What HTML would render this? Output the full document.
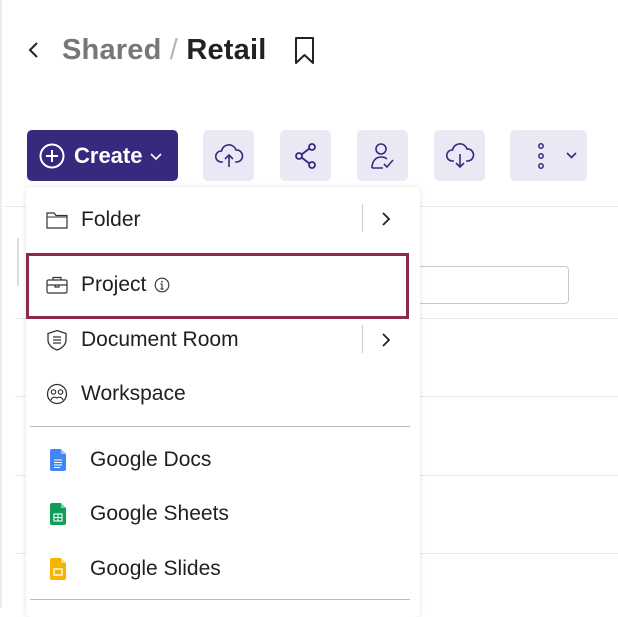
<!DOCTYPE html>
<html><head><meta charset="utf-8"><style>
*{margin:0;padding:0;box-sizing:border-box}
body{width:618px;height:608px;overflow:hidden;background:#fff;font-family:"Liberation Sans",sans-serif;position:relative;color:#1f1f1f}
.abs{position:absolute}
.edge{left:0;top:0;width:2px;height:608px;background:#ececf0}
.hl{height:1px;background:#e6e6e6}
.btn{top:130px;height:51px;background:#ebe8f5;border-radius:5px;display:flex;align-items:center;justify-content:center}
.menu{left:26px;top:187px;width:394px;height:430px;background:#fff;border-radius:5px;box-shadow:0 0 6px rgba(0,0,0,.12)}
.item{position:absolute;left:0;font-size:21px;color:#1f1f1f;display:flex;align-items:center}
.sep{position:absolute;left:4px;width:380px;height:1px;background:#bdbdbd}
</style></head><body>
<div class="abs edge"></div>
<svg class="abs" style="left:26px;top:40px" width="16" height="20" viewBox="0 0 16 20"><path d="M11 3 L4 10 L11 17" stroke="#222" stroke-width="2" fill="none"/></svg>
<div class="abs" style="left:62px;top:32px;font-size:29px;line-height:36px;font-weight:bold;letter-spacing:0.2px"><span style="color:#77777a">Shared</span> <span style="color:#b5b5b8;font-weight:normal">/</span> <span style="color:#222">Retail</span></div>
<svg class="abs" style="left:293px;top:36px" width="24" height="30" viewBox="0 0 24 30"><path d="M3 2 H20 V27 L11.5 19 L3 27 Z" stroke="#222" stroke-width="2" fill="none" stroke-linejoin="round"/></svg>

<div class="abs hl" style="left:5px;top:206px;width:613px"></div>
<div class="abs hl" style="left:15px;top:318px;width:603px"></div>
<div class="abs hl" style="left:15px;top:396px;width:603px"></div>
<div class="abs hl" style="left:15px;top:475px;width:603px"></div>
<div class="abs hl" style="left:15px;top:553px;width:603px"></div>
<div class="abs" style="left:17px;top:238px;width:2px;height:48px;background:#ddd"></div>
<div class="abs" style="left:400px;top:266px;width:169px;height:38px;border:1px solid #c8c8c8;border-radius:4px"></div>

<div class="abs" style="left:27px;top:130px;width:151px;height:51px;background:#372a7e;border-radius:5px;color:#fff;font-weight:bold;font-size:22px;display:flex;align-items:center">
<svg style="margin-left:11px" width="28" height="28" viewBox="0 0 28 28"><circle cx="14" cy="14" r="11.5" stroke="#fff" stroke-width="2" fill="none"/><path d="M14 8V20M8 14H20" stroke="#fff" stroke-width="2"/></svg>
<span style="margin-left:8px">Create</span>
<svg style="margin-left:7px" width="14" height="10" viewBox="0 0 14 10"><path d="M2 3 L7 8 L12 3" stroke="#fff" stroke-width="1.6" fill="none"/></svg></div>

<div class="abs btn" style="left:203px;width:51px"><svg width="30" height="26" viewBox="0 0 30 26"><path d="M9 19 H7 A5.5 5.5 0 0 1 7.5 8 A7.5 7.5 0 0 1 22 7 A5.5 5.5 0 0 1 23 19 H21" stroke="#372a7e" stroke-width="1.6" fill="none"/><path d="M15 24V12M11 16L15 12L19 16" stroke="#372a7e" stroke-width="1.6" fill="none"/></svg></div>
<div class="abs btn" style="left:280px;width:51px"><svg width="26" height="30" viewBox="0 0 26 30"><circle cx="19" cy="6" r="3" stroke="#372a7e" stroke-width="1.8" fill="none"/><circle cx="6" cy="15" r="3" stroke="#372a7e" stroke-width="1.8" fill="none"/><circle cx="19" cy="24" r="3" stroke="#372a7e" stroke-width="1.8" fill="none"/><path d="M8.6 13.5L16.4 7.5M8.6 16.5L16.4 22.5" stroke="#372a7e" stroke-width="1.8"/></svg></div>
<div class="abs btn" style="left:357px;width:51px"><svg width="28" height="30" viewBox="0 0 28 30"><circle cx="12" cy="8" r="5" stroke="#372a7e" stroke-width="1.6" fill="none"/><path d="M3 27 C3 20 7 16 12 16 C15 16 17 17 18 18" stroke="#372a7e" stroke-width="1.6" fill="none"/><path d="M3 27H14M15 23L18 26L24 19" stroke="#372a7e" stroke-width="1.6" fill="none"/></svg></div>
<div class="abs btn" style="left:434px;width:51px"><svg width="30" height="28" viewBox="0 0 30 28"><path d="M9 19 H7 A5.5 5.5 0 0 1 7.5 8 A7.5 7.5 0 0 1 22 7 A5.5 5.5 0 0 1 23 19 H21" stroke="#372a7e" stroke-width="1.6" fill="none"/><path d="M15 12V25M11 21L15 25L19 21" stroke="#372a7e" stroke-width="1.6" fill="none"/></svg></div>
<div class="abs btn" style="left:510px;width:77px"><svg width="60" height="30" viewBox="0 0 60 30"><circle cx="22" cy="5" r="2.2" stroke="#372a7e" stroke-width="1.5" fill="none"/><circle cx="22" cy="15" r="2.2" stroke="#372a7e" stroke-width="1.5" fill="none"/><circle cx="22" cy="25" r="2.2" stroke="#372a7e" stroke-width="1.5" fill="none"/><path d="M48 12L52.5 16.5L57 12" stroke="#372a7e" stroke-width="1.6" fill="none"/></svg></div>

<div class="abs menu">
 <div class="item" style="top:21px;left:20px"><svg width="22" height="20" viewBox="0 0 22 20"><path d="M1 3H8L10 5.5H21V18H1Z" stroke="#333" stroke-width="1.2" fill="none"/><path d="M1 7H21" stroke="#333" stroke-width="1"/></svg><span style="margin-left:13px">Folder</span></div>
 <div style="position:absolute;left:336px;top:17px;width:1px;height:28px;background:#ccc"></div>
 <svg style="position:absolute;left:354px;top:24px" width="12" height="16" viewBox="0 0 12 16"><path d="M3 2L9 8L3 14" stroke="#222" stroke-width="1.8" fill="none"/></svg>

 <div class="item" style="top:86px;left:20px"><svg width="22" height="20" viewBox="0 0 22 20"><rect x="1" y="5" width="20" height="13" rx="1.5" stroke="#333" stroke-width="1.2" fill="none"/><path d="M7 5V2.5H15V5M1 10H21M9 10V12H13V10" stroke="#333" stroke-width="1.2" fill="none"/></svg><span style="margin-left:13px">Project</span>
 <svg style="margin-left:8px" width="16" height="16" viewBox="0 0 16 16"><circle cx="8" cy="8" r="6.8" stroke="#333" stroke-width="1.1" fill="none"/><path d="M8 7V12M6.5 12H9.5M6.5 7H8" stroke="#333" stroke-width="1.2"/><circle cx="8" cy="4.8" r=".9" fill="#333"/></svg></div>

 <div class="item" style="top:141px;left:20px"><svg width="22" height="22" viewBox="0 0 22 22"><path d="M11 1.5L20 4.5V11C20 16 15.5 19.5 11 21C6.5 19.5 2 16 2 11V4.5Z" stroke="#333" stroke-width="1.3" fill="none"/><path d="M7 8H15M7 11H15M7 14H15" stroke="#333" stroke-width="1.3"/></svg><span style="margin-left:13px">Document Room</span></div>
 <div style="position:absolute;left:336px;top:138px;width:1px;height:28px;background:#ccc"></div>
 <svg style="position:absolute;left:354px;top:145px" width="12" height="16" viewBox="0 0 12 16"><path d="M3 2L9 8L3 14" stroke="#222" stroke-width="1.8" fill="none"/></svg>

 <div class="item" style="top:195px;left:20px"><svg width="22" height="22" viewBox="0 0 22 22"><circle cx="11" cy="11" r="9.5" stroke="#333" stroke-width="1.3" fill="none"/><circle cx="7.5" cy="9" r="2.2" stroke="#333" stroke-width="1.2" fill="none"/><circle cx="14.5" cy="9" r="2.2" stroke="#333" stroke-width="1.2" fill="none"/><path d="M5 17C6 14 9 13.5 11 15C13 13.5 16 14 17 17" stroke="#333" stroke-width="1.2" fill="none"/></svg><span style="margin-left:13px">Workspace</span></div>

 <div class="sep" style="top:239px"></div>

 <div class="item" style="top:261px;left:24px"><svg width="16" height="22" viewBox="0 0 16 22"><path d="M2 0H11L16 5V20A2 2 0 0 1 14 22H2A2 2 0 0 1 0 20V2A2 2 0 0 1 2 0Z" fill="#4285f4"/><path d="M11 0V5H16Z" fill="#a1c2fa"/><path d="M4 11H12M4 13.5H12M4 16H12M4 18.5H10" stroke="#fff" stroke-width="1.1"/></svg><span style="margin-left:24px">Google Docs</span></div>
 <div class="item" style="top:315px;left:24px"><svg width="16" height="22" viewBox="0 0 16 22"><path d="M2 0H11L16 5V20A2 2 0 0 1 14 22H2A2 2 0 0 1 0 20V2A2 2 0 0 1 2 0Z" fill="#0f9d58"/><path d="M11 0V5H16Z" fill="#87ceac"/><rect x="4" y="11" width="8" height="7" stroke="#fff" stroke-width="1.1" fill="none"/><path d="M4 14.5H12M8 11V18" stroke="#fff" stroke-width="1"/></svg><span style="margin-left:24px">Google Sheets</span></div>
 <div class="item" style="top:370px;left:24px"><svg width="16" height="22" viewBox="0 0 16 22"><path d="M2 0H11L16 5V20A2 2 0 0 1 14 22H2A2 2 0 0 1 0 20V2A2 2 0 0 1 2 0Z" fill="#f4b400"/><path d="M11 0V5H16Z" fill="#f9da80"/><rect x="4" y="11" width="8" height="6" stroke="#fff" stroke-width="1.4" fill="none"/></svg><span style="margin-left:24px">Google Slides</span></div>

 <div class="sep" style="top:412px"></div>
</div>
<div class="abs" style="left:26px;top:253px;width:383px;height:66px;border:3px solid #8b2a4e"></div>
</body></html>
